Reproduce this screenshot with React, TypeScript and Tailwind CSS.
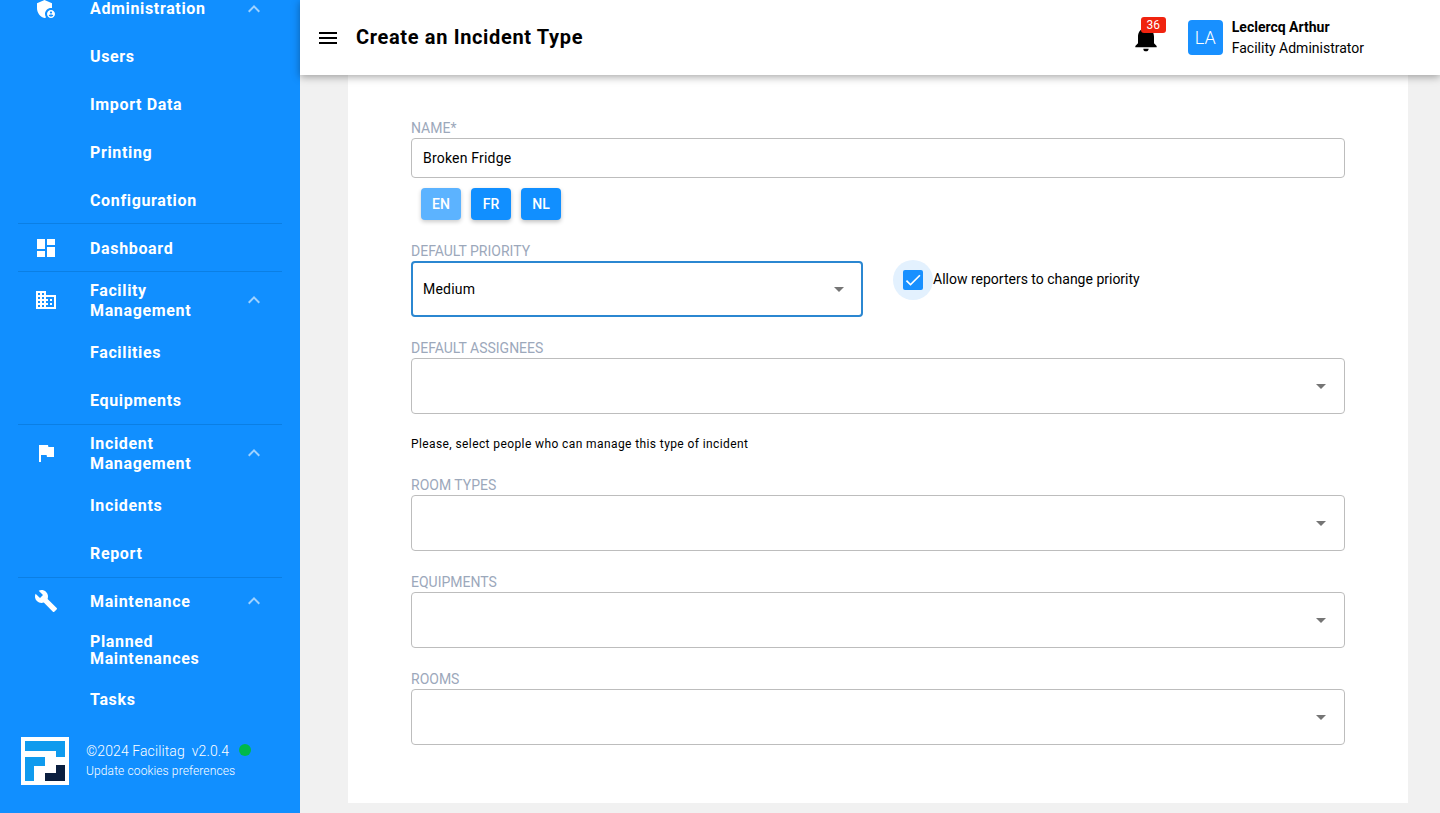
import type { ReactNode } from "react";
import {
  MdAdminPanelSettings,
  MdArrowDropDown,
  MdBuild,
  MdCheck,
  MdDashboard,
  MdDomain,
  MdExpandLess,
  MdFlag,
  MdMenu,
  MdNotifications,
} from "react-icons/md";

const navGroups = [
  {
    label: "Administration",
    icon: <MdAdminPanelSettings size={24} />,
    children: ["Users", "Import Data", "Printing", "Configuration"],
    nudge: false,
    tight: true,
  },
  { label: "Dashboard", icon: <MdDashboard size={24} />, children: [], nudge: true, tight: false },
  {
    label: "Facility Management",
    icon: <MdDomain size={24} />,
    children: ["Facilities", "Equipments"],
    nudge: true,
    tight: false,
  },
  {
    label: "Incident Management",
    icon: <MdFlag size={24} />,
    children: ["Incidents", "Report"],
    nudge: true,
    tight: false,
  },
];

function NavHeader({
  label,
  icon,
  more,
  nudge,
  compact,
}: {
  label: string;
  icon: ReactNode;
  more: boolean;
  nudge?: boolean;
  compact?: boolean;
}) {
  return (
    <div className={compact ? "flex min-h-[46px] items-center py-[7px]" : "flex min-h-[47px] items-center py-[7px]"}>
      <div className="flex w-[90px] justify-center">
        <span className="ml-[2px] text-white">{icon}</span>
      </div>
      <div
        className={
          nudge
            ? "w-[130px] pt-[2px] text-base leading-5 font-bold tracking-[0.65px] text-white"
            : "w-[130px] text-base leading-5 font-bold tracking-[0.65px] text-white"
        }
      >
        {label}
      </div>
      {more && <MdExpandLess size={24} className="ml-[22px] text-white/60" />}
    </div>
  );
}

function NavChild({ label }: { label: string }) {
  return (
    <div className="flex h-12 items-center pl-[90px] text-base leading-[17px] font-bold tracking-[0.65px] text-white">
      <span className="w-[130px]">{label}</span>
    </div>
  );
}

function Sidebar() {
  return (
    <aside className="flex h-full w-[300px] shrink-0 flex-col overflow-hidden bg-[#118fff]">
      <nav className="-mt-[15px] flex-1">
        {navGroups.map((group) => (
          <div key={group.label} className="mr-[18px] ml-[18px] border-b border-[#0b7fe4] [&>*]:-ml-[18px]">
            <NavHeader
              label={group.label}
              icon={group.icon}
              more={group.children.length > 0}
              nudge={group.nudge}
            />
            <div className={group.tight ? "-mb-px" : ""}>
              {group.children.map((child) => (
                <NavChild key={child} label={child} />
              ))}
            </div>
          </div>
        ))}
        <div className="mb-[2px]">
          <NavHeader label="Maintenance" icon={<MdBuild size={24} />} more nudge compact />
        </div>
        <NavChild label="Planned Maintenances" />
        <div className="h-px" />
        <NavChild label="Tasks" />
      </nav>
      <div className="flex items-start pb-7 pl-[21px]">
        <svg width="48" height="48" viewBox="0 0 48 48" className="shrink-0">
          <rect width="48" height="48" fill="#ffffff" />
          <path d="M4 4h40v16h-9v-6H4z" fill="#0f9bee" />
          <path d="M4 20h20v9H13v15H4z" fill="#0f9bee" />
          <path d="M35 28h9v16H24v-8h11z" fill="#0b1f3f" />
        </svg>
        <div className="ml-[17px] pt-1 text-white">
          <div className="flex items-start text-sm leading-[20px] font-light tracking-[0.1px]">
            <span className="whitespace-pre">©2024 Facilitag  v2.0.4</span>
            <span className="mt-[3px] ml-[10px] h-3 w-3 rounded-full bg-[#00b84a]" />
          </div>
          <div className="mt-[2px] text-xs leading-4 font-light tracking-[0.12px]">Update cookies preferences</div>
        </div>
      </div>
    </aside>
  );
}

function Topbar() {
  return (
    <header className="relative z-10 flex h-[75px] shrink-0 items-center bg-white pr-[76px] pl-4 shadow-[0_2px_8px_rgba(0,0,0,0.35)]">
      <MdMenu size={24} className="text-black" />
      <h1 className="ml-4 pb-[2px] text-xl font-bold tracking-[0.65px] text-black">Create an Incident Type</h1>
      <div className="relative ml-auto">
        <MdNotifications size={32} className="text-black" />
        <span className="absolute -top-[5px] left-[11px] flex h-4 w-[25px] items-center justify-center rounded-[3px] bg-[#f0230f] text-xs text-white">
          36
        </span>
      </div>
      <div className="ml-[26px] flex h-[35px] w-[35px] items-center justify-center rounded bg-[#1890ff] text-lg font-light text-white">
        LA
      </div>
      <div className="ml-[9px] flex flex-col gap-[3px] text-black">
        <span className="text-sm leading-[18px] font-bold">Leclercq Arthur</span>
        <span className="text-sm leading-[18px]">Facility Administrator</span>
      </div>
    </header>
  );
}

function Label({ children }: { children: ReactNode }) {
  return <div className="h-[21px] text-sm leading-[23px] text-[#9ca8bb]">{children}</div>;
}

function SelectBox({ value, focused, className }: { value?: string; focused?: boolean; className: string }) {
  return (
    <div
      className={
        focused
          ? `flex h-14 items-center rounded border-2 border-[#2b87d1] pr-[10px] pl-[10px] ${className}`
          : `flex h-14 items-center rounded border border-[#bdbdbd] pr-[11px] pl-[11px] ${className}`
      }
    >
      <span className="text-sm tracking-[0.2px] text-black">{value}</span>
      <MdArrowDropDown size={24} className="ml-auto text-[#757575]" />
    </div>
  );
}

function LangButton({ label, active }: { label: string; active?: boolean }) {
  return (
    <button
      className={
        active
          ? "h-8 w-10 rounded bg-[#5cb3ff] text-sm font-medium text-white shadow-[0_2px_4px_rgba(0,0,0,0.2)]"
          : "h-8 w-10 rounded bg-[#118fff] text-sm font-medium text-white shadow-[0_2px_4px_rgba(0,0,0,0.25)]"
      }
    >
      {label}
    </button>
  );
}

function Form() {
  return (
    <div className="mr-8 mb-[10px] ml-12 flex-1 bg-white px-[63px] pt-[42px]">
      <Label>NAME*</Label>
      <div className="flex h-10 items-center rounded border border-[#bdbdbd] pl-[11px] text-sm tracking-[0.2px] text-black">
        Broken Fridge
      </div>
      <div className="mt-[10px] flex gap-[10px] pl-[10px]">
        <LangButton label="EN" active />
        <LangButton label="FR" />
        <LangButton label="NL" />
      </div>

      <div className="mt-[20px]">
        <Label>DEFAULT PRIORITY</Label>
      </div>
      <div className="flex items-start">
        <SelectBox value="Medium" focused className="w-[452px]" />
        <div className="-mt-px ml-[30px] flex items-center">
          <div className="flex h-10 w-10 items-center justify-center rounded-full bg-[#e3f1fe]">
            <div className="flex h-5 w-5 items-center justify-center rounded-[2px] bg-[#1890ff]">
              <MdCheck size={20} className="text-white" />
            </div>
          </div>
          <span className="pb-[2px] text-sm text-black">Allow reporters to change priority</span>
        </div>
      </div>

      <div className="mt-[20px]">
        <Label>DEFAULT ASSIGNEES</Label>
      </div>
      <SelectBox className="w-full" />
      <p className="mt-[22px] text-xs leading-[16px] tracking-[0.4px] text-black">
        Please, select people who can manage this type of incident
      </p>

      <div className="mt-[22px]">
        <Label>ROOM TYPES</Label>
      </div>
      <SelectBox className="w-full" />

      <div className="mt-[20px]">
        <Label>EQUIPMENTS</Label>
      </div>
      <SelectBox className="w-full" />

      <div className="mt-[20px]">
        <Label>ROOMS</Label>
      </div>
      <SelectBox className="w-full" />
    </div>
  );
}

export default function App() {
  return (
    <div className="flex h-[813px] w-[1440px] overflow-hidden bg-[#f1f1f1] font-['Roboto',sans-serif]">
      <Sidebar />
      <main className="flex min-w-0 flex-1 flex-col">
        <Topbar />
        <Form />
      </main>
    </div>
  );
}
